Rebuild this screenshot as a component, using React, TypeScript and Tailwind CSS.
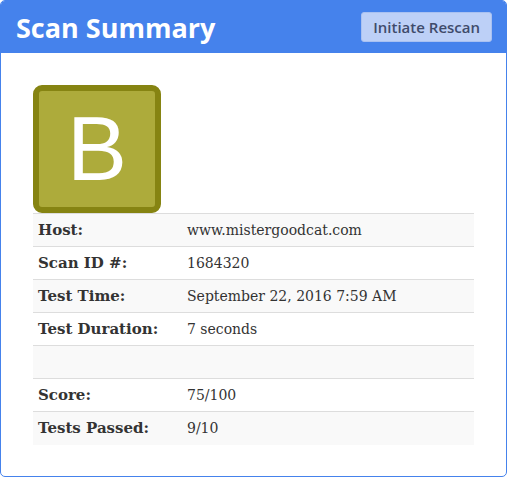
const ROWS: { label: string; value: string }[] = [
  { label: 'Host:', value: 'www.mistergoodcat.com' },
  { label: 'Scan ID #:', value: '1684320' },
  { label: 'Test Time:', value: 'September 22, 2016 7:59 AM' },
  { label: 'Test Duration:', value: '7 seconds' },
  { label: '', value: '' },
  { label: 'Score:', value: '75/100' },
  { label: 'Tests Passed:', value: '9/10' },
];

export default function App() {
  return (
    <div className="w-[507px] h-[477px] bg-white">
      <div className="h-[477px] flex flex-col rounded-[5px] border border-[#4582ec] overflow-hidden">
        {/* Header */}
        <div className="h-[52px] shrink-0 bg-[#4582ec] flex items-center justify-between pl-[15px] pr-[14px]">
          <h1
            className="text-[27px] font-bold text-white leading-none"
            style={{ fontFamily: '"Open Sans", Lato, sans-serif' }}
          >
            Scan Summary
          </h1>
          <button
            className="h-[30px] px-[11px] rounded-[3px] bg-[#bdd0f7] border border-[#a9c1f1] text-[15px] text-[#3f4b6b] font-semibold"
            style={{ fontFamily: '"Open Sans", Lato, sans-serif' }}
          >
            Initiate Rescan
          </button>
        </div>

        {/* Body */}
        <div className="flex-1 pt-[32px] pl-[32px] pr-[31px]">
          <div className="w-[128px] h-[128px] rounded-[9px] border-[6px] border-[#868412] bg-[#adab3b] flex items-center justify-center">
            <span
              className="text-white text-[90px] leading-none"
              style={{ fontFamily: '"Liberation Sans", Arial, sans-serif' }}
            >
              B
            </span>
          </div>

          <table
            className="w-[441px] border-collapse text-[#333]"
            style={{ fontFamily: 'Georgia, "DejaVu Serif", serif' }}
          >
            <tbody>
              {ROWS.map((r, i) => (
                <tr key={i} className={i % 2 === 0 ? 'bg-[#f9f9f9]' : 'bg-white'}>
                  <td className="h-[33px] w-[154px] px-[5px] border-t border-[#dddddd] font-bold text-[15px] align-middle">
                    {r.label}
                  </td>
                  <td className="h-[33px] px-0 border-t border-[#dddddd] text-[14px] align-middle">{r.value}</td>
                </tr>
              ))}
            </tbody>
          </table>
        </div>
      </div>
    </div>
  );
}
